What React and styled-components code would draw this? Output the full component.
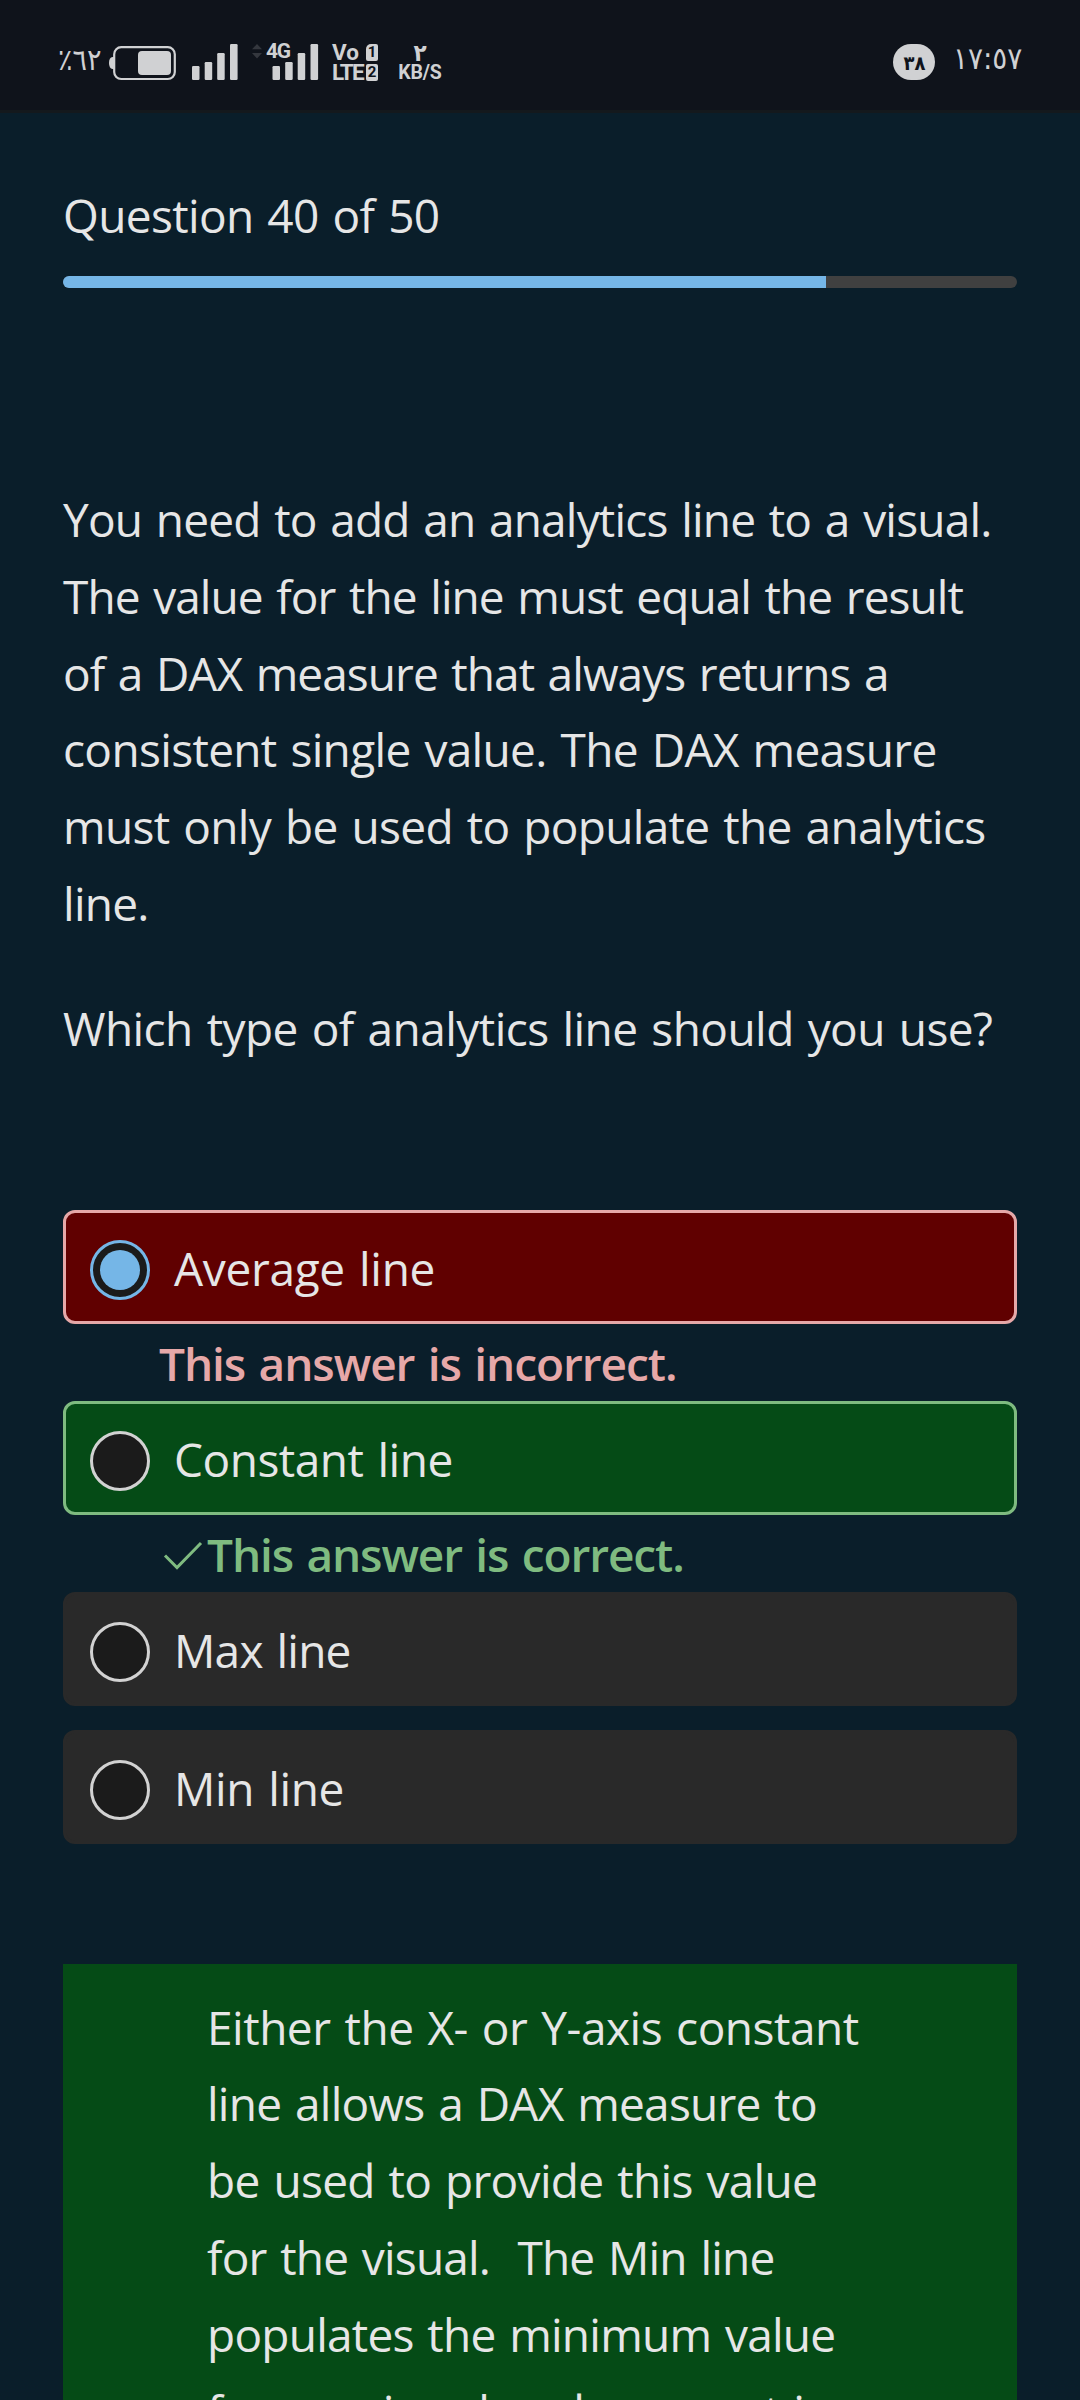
import React from 'react';
import styled, { createGlobalStyle, css } from 'styled-components';

const color = {
  page: '#0a1e2a',
  bar: '#0f131b',
  icon: '#d0d1d3',
  text: '#e6e6e6',
  accent: '#75b6e7',
  wrong: '#e6a8a8',
  right: '#7fbb80',
  green: '#054b16',
};

const GlobalStyle = createGlobalStyle`
  * { box-sizing: border-box; }
  html, body { margin: 0; background: ${color.page}; }
  body { font-family: "Open Sans", "Noto Sans", sans-serif; }
`;

const Screen = styled.div`
  width: 1080px;
  height: 2400px;
  overflow: hidden;
  background: ${color.page};
  color: ${color.text};
  font-size: 46px;
`;

const StatusBar = styled.header`
  display: flex;
  justify-content: space-between;
  align-items: flex-start;
  height: 113px;
  padding: 42px 62px 0 58px;
  background: ${color.bar};
  border-bottom: 3px solid #14191d;
  color: ${color.icon};
`;

const StatusGroup = styled.div`
  display: flex;
  align-items: flex-start;
  height: 40px;
`;

const ArabicDigits = styled.span`
  display: block;
  width: ${(p) => p.$width}px;
  margin-top: ${(p) => p.$top || 0}px;
  font: ${(p) => p.$weight || 400} ${(p) => p.$size}px/36px "DejaVu Sans Condensed", "DejaVu Sans", sans-serif;
  letter-spacing: ${(p) => p.$tracking || 0}px;
  direction: ltr;
  unicode-bidi: bidi-override;
  white-space: nowrap;
`;

const Glyph = styled.svg`
  display: block;
  flex: none;
  margin-left: ${(p) => p.$gap || 0}px;
`;

const MobileData = styled.div`
  display: grid;
  margin-left: 13px;
  > * { grid-area: 1 / 1; }
`;

const NetworkType = styled.span`
  margin-left: 15px;
  font: 700 21px/18px Roboto, sans-serif;
  letter-spacing: -1.4px;
`;

const Volte = styled.div`
  display: grid;
  grid-template-columns: 34px 13px;
  grid-template-rows: 20px 20px;
  margin-left: 13px;
  font: 700 22.5px/20px Roboto, sans-serif;
  letter-spacing: -1.6px;
`;

const VolteText = styled.span`
  letter-spacing: ${(p) => p.$tracking}px;
`;

const SimBadge = styled.span`
  width: 12px;
  height: 17px;
  margin-top: 2px;
  border-radius: ${(p) => (p.$cut ? '5px 2px 2px 2px' : '2px')};
  background: ${color.icon};
  color: ${color.bar};
  font: 700 15px/17px Roboto, sans-serif;
  letter-spacing: 0;
  text-align: center;
`;

const Speed = styled.div`
  display: flex;
  flex-direction: column;
  align-items: center;
  width: 46px;
  margin-left: 18px;
`;

const SpeedValue = styled.span`
  height: 19px;
  font: 700 24px/22px "DejaVu Sans Condensed", "DejaVu Sans", sans-serif;
`;

const SpeedUnit = styled.span`
  font: 700 19.5px/24px Roboto, sans-serif;
  letter-spacing: -0.2px;
`;

const CountPill = styled.div`
  display: flex;
  justify-content: center;
  width: 42px;
  height: 36px;
  margin: 2px 18px 0 0;
  border-radius: 18px;
  background: ${color.icon};
  color: ${color.bar};
`;

const Main = styled.main`
  display: flex;
  flex-direction: column;
  padding: 70px 63px 0;
`;

const Line = styled.span`
  display: block;
  white-space: pre;
  word-spacing: 2.5px;
  letter-spacing: ${(p) => p.$tracking}px;
`;

const Counter = styled.h1`
  margin: 0;
  font-size: 46px;
  font-weight: 400;
  line-height: 64px;
`;

const Track = styled.div`
  height: 12px;
  margin-top: 29px;
  overflow: hidden;
  border-radius: 6px;
  background: #404040;
`;

const TrackFill = styled.div`
  width: 80%;
  height: 100%;
  background: ${color.accent};
`;

const Prompt = styled.section`
  display: flex;
  flex-direction: column;
  gap: 48px;
  margin-top: 193px;
  line-height: 76.8px;
`;

const Paragraph = styled.p`
  margin: 0;
`;

const Options = styled.div`
  display: flex;
  flex-direction: column;
  margin-top: 143px;
`;

const tones = {
  wrong: css`
    background: #600000;
    border-color: ${color.wrong};
  `,
  right: css`
    background: ${color.green};
    border-color: ${color.right};
  `,
  plain: css`
    background: #292929;
    border-color: #292929;
  `,
};

const Option = styled.label`
  display: flex;
  align-items: center;
  gap: 24px;
  height: 114px;
  padding: 6px 24px 0;
  border: 3px solid;
  border-radius: 12px;
  line-height: 64px;
  ${(p) => tones[p.$tone]}

  & + & { margin-top: 24px; }
  ${Line} { margin-bottom: 4px; }
`;

const Radio = styled.span`
  display: flex;
  flex: none;
  align-items: center;
  justify-content: center;
  width: 60px;
  height: 60px;
  border: 3px solid ${(p) => (p.$checked ? color.accent : '#d2d2d2')};
  border-radius: 50%;
  background: #1b1b1b;

  &::after {
    content: '';
    width: 40px;
    height: 40px;
    border-radius: 50%;
    background: ${(p) => (p.$checked ? color.accent : 'transparent')};
  }
`;

const Feedback = styled.div`
  display: flex;
  align-items: center;
  height: 77px;
  padding: 1px 0 0 96px;
  color: ${(p) => color[p.$tone]};
  font-weight: 600;
  line-height: 76px;
`;

const Explanation = styled.section`
  height: 460px;
  margin-top: 120px;
  padding: 25px 144px 0;
  background: ${color.green};
  line-height: 76.8px;
`;

const promptLines = [
  ['You need to add an analytics line to a visual.', -0.82],
  ['The value for the line must equal the result', -0.92],
  ['of a DAX measure that always returns a', -0.94],
  ['consistent single value. The DAX measure', -0.66],
  ['must only be used to populate the analytics', -0.66],
  ['line.', -0.73],
];

const explanationLines = [
  ['Either the X- or Y-axis constant', -0.48],
  ['line allows a DAX measure to', -0.75],
  ['be used to provide this value', -0.68],
  ['for the visual.\u00a0 The Min line', -0.81],
  ['populates the minimum value', -0.76],
  ['for a series already present in', -0.8],
];

const Lines = ({ items }) =>
  items.map(([text, tracking]) => (
    <Line key={text} $tracking={tracking}>{text}</Line>
  ));

const Bars = () => (
  <g fill={color.icon}>
    <rect x="0" y="24" width="7.5" height="14" rx="1.2" />
    <rect x="12.7" y="20" width="7.5" height="18" rx="1.2" />
    <rect x="25.2" y="11" width="7.5" height="27" rx="1.2" />
    <rect x="38" y="2" width="7.6" height="36" rx="1.2" />
  </g>
);

const Battery = () => (
  <Glyph $gap={6} width="67" height="40" viewBox="0 0 67 40">
    <path d="M5.5 15H3.6Q0 15.5 0 21t3.6 6H5.5Z" fill={color.icon} />
    <rect x="5.2" y="5.2" width="60.6" height="31.8" rx="7" fill="none" stroke={color.icon} strokeWidth="2.2" />
    <rect x="29" y="9" width="33" height="24" rx="4" fill={color.icon} />
  </Glyph>
);

export default function App() {
  return (
    <Screen>
      <GlobalStyle />
      <StatusBar>
        <StatusGroup>
          <ArabicDigits $width={45} $size={30} $tracking={-0.2}>٪٦٢</ArabicDigits>
          <Battery />
          <Glyph $gap={16} width="46" height="40" viewBox="0 0 46 40"><Bars /></Glyph>
          <MobileData>
            <Glyph width="68" height="40" viewBox="0 0 68 40">
              <path d="M1 7.3 6 2l5 5.300Z M1 11h10l-5 5.500Z" fill="#34373e" />
              <g transform="translate(21.500 0)"><Bars /></g>
            </Glyph>
            <NetworkType>4G</NetworkType>
          </MobileData>
          <Volte>
            <VolteText $tracking={0}>Vo</VolteText>
            <SimBadge $cut>1</SimBadge>
            <VolteText $tracking={-1.8}>LTE</VolteText>
            <SimBadge>2</SimBadge>
          </Volte>
          <Speed>
            <SpeedValue>٢</SpeedValue>
            <SpeedUnit>KB/S</SpeedUnit>
          </Speed>
        </StatusGroup>
        <StatusGroup>
          <CountPill>
            <ArabicDigits $width={21} $size={20} $top={1} $weight={700} $tracking={-1}>٣٨</ArabicDigits>
          </CountPill>
          <ArabicDigits $width={65} $size={31} $top={-2} $tracking={-2.8}>١٧:٥٧</ArabicDigits>
        </StatusGroup>
      </StatusBar>
      <Main>
        <Counter><Line $tracking={-0.64}>Question 40 of 50</Line></Counter>
        <Track><TrackFill /></Track>
        <Prompt>
          <Paragraph><Lines items={promptLines} /></Paragraph>
          <Paragraph><Line $tracking={-0.56}>Which type of analytics line should you use?</Line></Paragraph>
        </Prompt>
        <Options>
          <Option $tone="wrong"><Radio $checked /><Line $tracking={-0.31}>Average line</Line></Option>
          <Feedback $tone="wrong"><Line $tracking={-1.06}>This answer is incorrect.</Line></Feedback>
          <Option $tone="right"><Radio /><Line $tracking={-0.48}>Constant line</Line></Option>
          <Feedback $tone="right">
            <Glyph width="48" height="48" viewBox="0 0 48 48">
              <path d="M6 25.500 18 37.500 42 13" fill="none" stroke={color.right} strokeWidth="3" />
            </Glyph>
            <Line $tracking={-1.1}>This answer is correct.</Line>
          </Feedback>
          <Option $tone="plain"><Radio /><Line $tracking={-0.76}>Max line</Line></Option>
          <Option $tone="plain"><Radio /><Line $tracking={-0.37}>Min line</Line></Option>
        </Options>
        <Explanation><Lines items={explanationLines} /></Explanation>
      </Main>
    </Screen>
  );
}
